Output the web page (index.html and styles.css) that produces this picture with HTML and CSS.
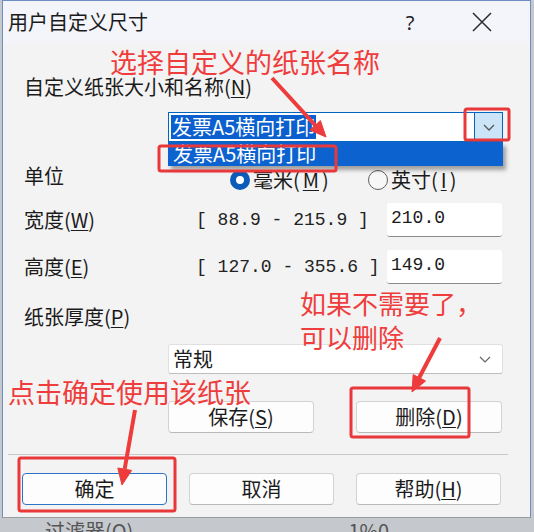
FILE: index.html
```html
<!DOCTYPE html>
<html lang="zh-CN">
  <head>
    <meta charset="UTF-8" />
    <title>用户自定义尺寸</title>
    <link rel="stylesheet" href="styles.css">
  </head>
  <body>
    <div class="screen">
      <div class="dialog">
        <div class="titlebar">
          <span class="title">用户自定义尺寸</span>
          <span class="help">?</span>
          <span class="close">
            <svg width="22" height="22" viewBox="0 0 22 22"><path d="M2 2 L20 20 M20 2 L2 20" stroke="#2b2b2b" stroke-width="1.5" fill="none"/></svg>
          </span>
        </div>

        <div class="content">
          <div class="label name-label">自定义纸张大小和名称(<u>N</u>)</div>

          <div class="combo-row">
            <div class="combo focused">
              <span class="sel">发票A5横向打印</span>
              <span class="drop">
                <svg width="12" height="7" viewBox="0 0 12 7"><path d="M1 1 L6 6 L11 1" stroke="#555" stroke-width="1.3" fill="none"/></svg>
              </span>
            </div>
            <div class="droplist">发票A5横向打印</div>
          </div>

          <div class="unit-row">
            <span class="label unit-label">单位</span>
            <span class="radio checked"><i></i>毫米(<u>M</u>)</span>
            <span class="radio"><i></i>英寸(<u>I</u>)</span>
          </div>

          <div class="dim-row width-row">
            <span class="label">宽度(<u>W</u>)</span>
            <span class="range">[ 88.9 - 215.9 ]</span>
            <span class="field">210.0</span>
          </div>

          <div class="dim-row height-row">
            <span class="label">高度(<u>E</u>)</span>
            <span class="range">[ 127.0 - 355.6 ]</span>
            <span class="field">149.0</span>
          </div>

          <div class="label thick-label">纸张厚度(<u>P</u>)</div>

          <div class="combo paper-combo">
            <span class="value">常规</span>
            <span class="chev">
              <svg width="12" height="7" viewBox="0 0 12 7"><path d="M1 1 L6 6 L11 1" stroke="#666" stroke-width="1.2" fill="none"/></svg>
            </span>
          </div>

          <div class="btn-row">
            <button class="btn">保存(<u>S</u>)</button>
            <button class="btn">删除(<u>D</u>)</button>
          </div>

          <div class="sep"></div>

          <div class="btn-row bottom-row">
            <button class="btn default">确定</button>
            <button class="btn">取消</button>
            <button class="btn">帮助(<u>H</u>)</button>
          </div>
        </div>
      </div>

      <div class="under">
        <span class="under-a">过滤器(Q)</span>
        <span class="under-b">1%0</span>
      </div>

      <!-- annotations drawn over the dialog -->
      <svg class="marks" width="534" height="532" viewBox="0 0 534 532">
        <g fill="none" stroke="#e8383a" stroke-width="3">
          <rect x="465" y="109" width="44" height="31" rx="2"/>
          <rect x="159" y="146" width="177" height="25" rx="2"/>
          <rect x="351" y="388" width="118" height="49" rx="2"/>
          <rect x="19" y="458" width="156" height="53" rx="2"/>
        </g>
        <g fill="#ee3b3b" stroke="#ee3b3b">
          <line x1="272" y1="78" x2="315" y2="125" stroke-width="4"/>
          <polygon points="326,137 310,130 320.4,120.5" stroke-width="1"/>
          <line x1="440" y1="338" x2="419" y2="378" stroke-width="4"/>
          <polygon points="412,392 413.2,374.6 425.6,381" stroke-width="1"/>
          <line x1="135" y1="410" x2="124.7" y2="469" stroke-width="4"/>
          <polygon points="122,485 117.8,468 131.6,470.4" stroke-width="1"/>
        </g>
      </svg>
      <div class="note note-select">选择自定义的纸张名称</div>
      <div class="note note-delete">如果不需要了，<br>可以删除</div>
      <div class="note note-ok">点击确定使用该纸张</div>
    </div>
  </body>
</html>
```

FILE: styles.css
```css
* {
  box-sizing: border-box;
}

html,
body {
  margin: 0;
}

body {
  width: 534px;
  height: 532px;
  overflow: hidden;
  background: #c5c8cd;
  font-family: "Noto Sans CJK SC", "Noto Sans", sans-serif;
  color: #1b1b1b;
}

.screen {
  position: relative;
  width: 534px;
  height: 532px;
}

.dialog {
  margin-left: 2px;
  width: 529px;
  height: 518px;
  background: #f3f3f3;
  border: 1px solid #6d8fc0;
  border-bottom-color: #9a9ca0;
  display: flex;
  flex-direction: column;
}

.titlebar {
  height: 42px;
  display: flex;
  align-items: center;
  padding-left: 5px;
  background: #f3f5fa;
}

.title {
  font-size: 20px;
  line-height: 24px;
}

.help {
  margin-left: auto;
  width: 20px;
  text-align: center;
  font-size: 20px;
  font-family: "Noto Sans", sans-serif;
  color: #222;
}

.close {
  display: flex;
  margin-left: 51px;
  margin-right: 37px;
}

.content {
  padding-left: 21px;
  display: flex;
  flex-direction: column;
}

.label {
  font-size: 20px;
  line-height: 24px;
}

.label u,
.radio u,
.btn u {
  text-decoration-thickness: 1px;
  text-underline-offset: 2px;
}

.name-label {
  margin-top: 32px;
}

.combo-row {
  position: relative;
  margin-top: 13px;
  margin-left: 144px;
  width: 335px;
  height: 30px;
}

.combo {
  height: 30px;
  background: #fff;
  display: flex;
  align-items: center;
}

.combo.focused {
  border: 1px solid #0067c0;
}

.sel {
  margin-left: 2px;
  background: #0b5fce;
  color: #fff;
  font-size: 20px;
  line-height: 24px;
  padding: 0 1px;
}

.drop {
  margin-left: auto;
  width: 28px;
  height: 100%;
  background: #cce4f7;
  border-left: 1px solid #0067c0;
  display: flex;
  align-items: center;
  justify-content: center;
}

.droplist {
  position: absolute;
  top: 30px;
  left: 0;
  width: 335px;
  height: 24px;
  padding-left: 5px;
  background: #0c63cf;
  color: #fff;
  font-size: 20px;
  line-height: 24px;
  box-shadow: 3px 4px 4px rgba(0, 0, 0, 0.35);
  z-index: 1;
}

.unit-row {
  margin-top: 22px;
  display: flex;
  align-items: flex-start;
  height: 24px;
}

.unit-label {
  width: 206px;
}

.radio {
  display: flex;
  align-items: center;
  gap: 3px;
  margin-top: 4px;
  font-size: 20px;
  line-height: 24px;
}

.radio i {
  width: 20px;
  height: 20px;
  border-radius: 50%;
  border: 1.5px solid #5f5f5f;
  background: #f7f7f7;
}

.radio.checked {
  width: 138px;
}

.radio.checked i {
  border: 6px solid #0b5bb9;
  background: #fff;
}

.dim-row {
  display: grid;
  grid-template-columns: 172px 191px 115px;
  align-items: center;
  height: 34px;
}

.width-row {
  margin-top: 15px;
}

.height-row {
  margin-top: 13px;
}

.range {
  font-family: "Liberation Mono", "DejaVu Sans Mono", monospace;
  font-size: 18px;
  color: #222;
}

.field {
  height: 34px;
  background: #fff;
  border-radius: 3px;
  border-bottom: 1px solid #8a8a8a;
  padding: 4px 0 0 4px;
  font-family: "Liberation Mono", "DejaVu Sans Mono", monospace;
  font-size: 18px;
  line-height: 22px;
}

.thick-label {
  margin-top: 21px;
}

.paper-combo {
  margin-top: 15px;
  margin-left: 144px;
  width: 335px;
  border: 1px solid #e0e0e0;
  border-bottom-color: #bdbdbd;
  border-radius: 3px;
  padding-left: 4px;
}

.value {
  font-size: 20px;
  line-height: 24px;
}

.chev {
  margin-left: auto;
  margin-right: 11px;
  display: flex;
}

.btn-row {
  display: flex;
  gap: 42px;
  margin-top: 27px;
  margin-left: 144px;
}

.btn {
  width: 146px;
  height: 32px;
  padding: 0;
  background: #fdfdfd;
  border: 1px solid #d3d3d3;
  border-bottom-color: #b9b9b9;
  border-radius: 4px;
  font-family: inherit;
  font-size: 20px;
  line-height: 24px;
  color: #1b1b1b;
}

.btn.default {
  border: 1px solid #2b74c6;
}

.sep {
  margin-top: 21px;
  margin-left: -16px;
  width: 500px;
  height: 1px;
  background: #c9c9c9;
}

.bottom-row {
  margin-top: 18px;
  margin-left: -2px;
  gap: 22px;
}

.bottom-row .btn {
  width: 145px;
}

.under {
  height: 14px;
  overflow: hidden;
  display: flex;
  font-size: 20px;
  line-height: 24px;
  color: #555;
  background: #c5c8cd;
}

.under-a {
  margin-left: 45px;
  margin-top: 1px;
}

.under-b {
  margin-left: 215px;
  margin-top: 1px;
}

.marks {
  position: absolute;
  top: 0;
  left: 0;
  z-index: 2;
}

.note {
  position: absolute;
  z-index: 3;
  color: #ef3d3d;
  font-size: 27px;
  line-height: 1;
}

.note-select {
  top: 48px;
  left: 110px;
}

.note-delete {
  top: 286px;
  left: 300px;
  line-height: 34px;
  font-size: 26px;
}

.note-ok {
  top: 378px;
  left: 8px;
}
```
